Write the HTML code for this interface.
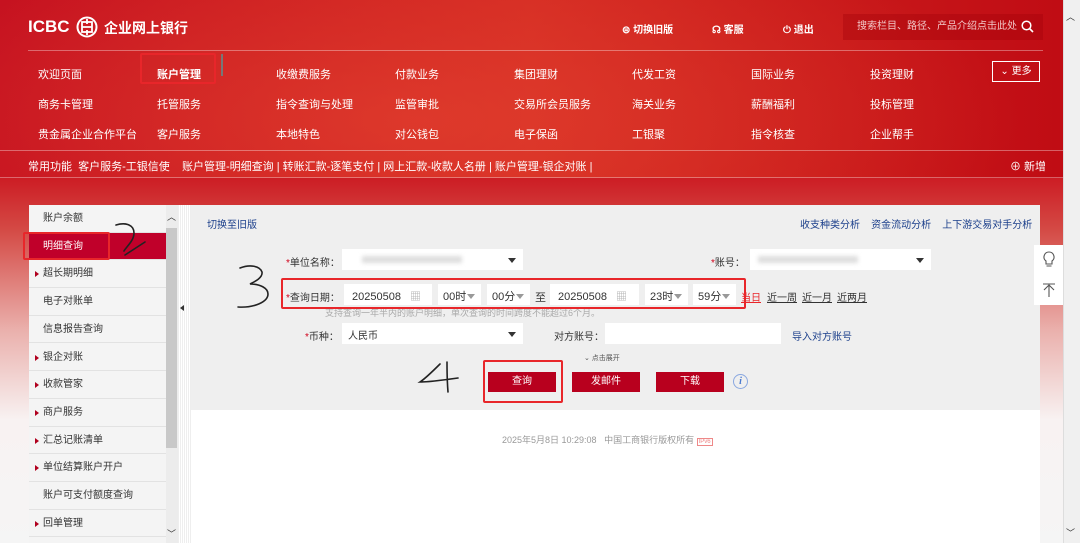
<!DOCTYPE html>
<html><head><meta charset="utf-8"><style>
*{margin:0;padding:0;box-sizing:border-box}
body{width:1080px;height:543px;overflow:hidden;position:relative;font-family:"Liberation Sans","Noto Sans CJK SC",sans-serif;font-size:11px;color:#333;background:#f3f3f3}
.abs{position:absolute;white-space:nowrap}
#bg{position:absolute;left:0;top:0;width:1063px;height:543px;background:linear-gradient(180deg,#c8141e 0px,#cc1a22 175px,#d44a45 230px,#eab0ac 330px,#f8f2f2 420px,#f5f5f5 543px)}
#hdr{position:absolute;left:0;top:0;width:1063px;height:178px;background:radial-gradient(ellipse 600px 200px at 420px 120px,rgba(230,70,50,.6),rgba(0,0,0,0)),linear-gradient(90deg,#c40f1f,#d42a22 50%,#c00c14)}
.w{color:#fff}
.menu{font-size:11px;color:#fff}
.line{position:absolute;height:1px;background:rgba(255,255,255,.35)}
.side{position:absolute;left:29px;top:205px;width:137px;height:338px;background:#f4f4f4}
.si{position:absolute;left:0;width:137px;height:27.7px;border-bottom:1px solid #e2e2e2;font-size:10px;color:#333;padding-left:14px;line-height:27px;white-space:nowrap}
.si.ar:before{content:"";position:absolute;left:6px;top:11px;border-left:4px solid #b0001e;border-top:3px solid transparent;border-bottom:3px solid transparent}
.panel{position:absolute;left:191px;top:205px;width:849px;height:205px;background:#efefef}
.box{position:absolute;background:#fff;height:21px;white-space:nowrap;overflow:hidden}
.lbl{position:absolute;font-size:10px;color:#333;white-space:nowrap}
.lbl i{color:#d0021b;font-style:normal}
.tri{position:absolute;border-top:5px solid #333;border-left:4px solid transparent;border-right:4px solid transparent}
.gtri{display:inline-block;border-top:5px solid #999;border-left:4px solid transparent;border-right:4px solid transparent;margin-left:1px;vertical-align:1px}
.btn{position:absolute;top:372px;width:68px;height:20px;background:#b8001e;color:#fff;font-size:10px;text-align:center;line-height:20px}
.rb{position:absolute;border:2px solid #e8262a;border-radius:2px}
.link{color:#1b3f8b;font-size:10px}
.u{text-decoration:underline;color:#333;font-size:10px}
</style></head><body>
<div id="bg"></div>
<div id="hdr"></div>
<div class="abs w" style="left:28px;top:17px;font-size:17px;font-weight:bold">ICBC</div>
<svg class="abs" style="left:76px;top:16px" width="22" height="22" viewBox="0 0 22 22"><circle cx="11" cy="11" r="9.5" fill="none" stroke="#fff" stroke-width="2"/><rect x="6" y="6" width="10" height="10" fill="none" stroke="#fff" stroke-width="1.8"/><path d="M11 3v5M11 14v5M6 11h10" stroke="#fff" stroke-width="1.8"/></svg>
<div class="abs w" style="left:104px;top:18px;font-size:14px;font-weight:bold">企业网上银行</div>
<div class="abs w" style="left:622px;top:21px;font-size:10px;font-weight:bold">⊜ 切换旧版</div>
<div class="abs w" style="left:712px;top:21px;font-size:10px;font-weight:bold">☊ 客服</div>
<div class="abs w" style="left:783px;top:21px;font-size:10px;font-weight:bold">⏻ 退出</div>
<div class="abs" style="left:843px;top:14px;width:200px;height:26px;background:rgba(160,0,10,.35);color:#f2c8c8;font-size:10px;line-height:26px;padding-left:14px">搜索栏目、路径、产品介绍点击此处</div>
<svg class="abs" style="left:1021px;top:20px" width="13" height="13"><circle cx="5.5" cy="5.5" r="4.3" fill="none" stroke="#fff" stroke-width="1.5"/><path d="M8.5 8.5l3.5 3.5" stroke="#fff" stroke-width="1.6"/></svg>
<div class="line" style="left:28px;top:50px;width:1015px"></div>
<div class="menu">
<div class="abs" style="left:38px;top:66px">欢迎页面</div><div class="abs" style="left:157px;top:66px;font-weight:bold">账户管理</div><div class="abs" style="left:276px;top:66px">收缴费服务</div><div class="abs" style="left:395px;top:66px">付款业务</div><div class="abs" style="left:514px;top:66px">集团理财</div><div class="abs" style="left:632px;top:66px">代发工资</div><div class="abs" style="left:751px;top:66px">国际业务</div><div class="abs" style="left:870px;top:66px">投资理财</div>
<div class="abs" style="left:38px;top:96px">商务卡管理</div><div class="abs" style="left:157px;top:96px">托管服务</div><div class="abs" style="left:276px;top:96px">指令查询与处理</div><div class="abs" style="left:395px;top:96px">监管审批</div><div class="abs" style="left:514px;top:96px">交易所会员服务</div><div class="abs" style="left:632px;top:96px">海关业务</div><div class="abs" style="left:751px;top:96px">薪酬福利</div><div class="abs" style="left:870px;top:96px">投标管理</div>
<div class="abs" style="left:38px;top:126px">贵金属企业合作平台</div><div class="abs" style="left:157px;top:126px">客户服务</div><div class="abs" style="left:276px;top:126px">本地特色</div><div class="abs" style="left:395px;top:126px">对公钱包</div><div class="abs" style="left:514px;top:126px">电子保函</div><div class="abs" style="left:632px;top:126px">工银聚</div><div class="abs" style="left:751px;top:126px">指令核查</div><div class="abs" style="left:870px;top:126px">企业帮手</div>
</div>
<div class="abs w" style="left:992px;top:61px;width:48px;height:21px;border:1px solid #fff;font-size:10px;line-height:19px;text-align:center">⌄ 更多</div>
<div class="abs" style="left:221px;top:54px;width:2px;height:22px;background:#777"></div>
<div class="line" style="left:0;top:150px;width:1063px"></div>
<div class="abs w" style="left:28px;top:158px;font-size:11px">常用功能&nbsp; 客户服务-工银信使&nbsp;&nbsp;&nbsp; 账户管理-明细查询 | 转账汇款-逐笔支付 | 网上汇款-收款人名册 | 账户管理-银企对账 |</div>
<div class="abs w" style="left:1010px;top:158px;font-size:11px">⊕ 新增</div>
<div class="line" style="left:0;top:177px;width:1063px"></div>

<div class="side">
<div class="si" style="top:0">账户余额</div>
<div class="si" style="top:27.7px;background:#c0002a;color:#fff">明细查询</div>
<div class="si ar" style="top:55.4px">超长期明细</div>
<div class="si" style="top:83.1px">电子对账单</div>
<div class="si" style="top:110.8px">信息报告查询</div>
<div class="si ar" style="top:138.5px">银企对账</div>
<div class="si ar" style="top:166.2px">收款管家</div>
<div class="si ar" style="top:193.9px">商户服务</div>
<div class="si ar" style="top:221.6px">汇总记账清单</div>
<div class="si ar" style="top:249.3px">单位结算账户开户</div>
<div class="si" style="top:277px">账户可支付额度查询</div>
<div class="si ar" style="top:304.7px">回单管理</div>
</div>
<div class="abs" style="left:166px;top:205px;width:12px;height:338px;background:#ececec"></div>
<div class="abs" style="left:166px;top:228px;width:11px;height:220px;background:#c8c8c8"></div>
<div class="abs" style="left:167px;top:210px;font-size:9px;color:#333">︿</div>
<div class="abs" style="left:167px;top:527px;font-size:9px;color:#333">﹀</div>
<div class="abs" style="left:178px;top:205px;width:13px;height:338px;background:repeating-linear-gradient(90deg,#eee 0 1px,#fff 1px 2px)"></div>
<div class="abs" style="left:180px;top:305px;border-right:4px solid #333;border-top:3px solid transparent;border-bottom:3px solid transparent"></div>

<div class="abs" style="left:191px;top:410px;width:849px;height:133px;background:#fff"></div>
<div class="panel"></div>
<div class="abs link" style="left:207px;top:216px">切换至旧版</div>
<div class="abs link" style="left:800px;top:216px">收支种类分析&nbsp;&nbsp;&nbsp; 资金流动分析&nbsp;&nbsp;&nbsp; 上下游交易对手分析</div>

<div class="lbl" style="left:286px;top:254px"><i>*</i>单位名称：</div>
<div class="box" style="left:342px;top:249px;width:181px"><div class="abs" style="left:20px;top:7px;width:100px;height:7px;background:#ddd;filter:blur(2px)"></div></div>
<div class="tri" style="left:508px;top:258px"></div>
<div class="lbl" style="left:711px;top:254px"><i>*</i>账号：</div>
<div class="box" style="left:750px;top:249px;width:181px"><div class="abs" style="left:8px;top:7px;width:100px;height:7px;background:#ddd;filter:blur(2px)"></div></div>
<div class="tri" style="left:916px;top:258px"></div>

<div class="lbl" style="left:286px;top:289px"><i>*</i>查询日期：</div>
<div class="box" style="left:344px;top:284px;width:88px;padding:4px 8px;font-size:11px">20250508 <span style="color:#aaa;margin-left:6px">▦</span></div>
<div class="box" style="left:438px;top:284px;width:43px;padding:4px 5px;font-size:11px">00时<span class="gtri"></span></div>
<div class="box" style="left:487px;top:284px;width:43px;padding:4px 5px;font-size:11px">00分<span class="gtri"></span></div>
<div class="lbl" style="left:535px;top:289px;font-size:11px">至</div>
<div class="box" style="left:550px;top:284px;width:89px;padding:4px 8px;font-size:11px">20250508 <span style="color:#aaa;margin-left:6px">▦</span></div>
<div class="box" style="left:645px;top:284px;width:43px;padding:4px 5px;font-size:11px">23时<span class="gtri"></span></div>
<div class="box" style="left:693px;top:284px;width:43px;padding:4px 5px;font-size:11px">59分<span class="gtri"></span></div>
<div class="abs" style="left:741px;top:289px;font-size:10px;color:#e8262a;text-decoration:underline">当日</div>
<div class="abs u" style="left:767px;top:289px">近一周</div>
<div class="abs u" style="left:802px;top:289px">近一月</div>
<div class="abs u" style="left:837px;top:289px">近两月</div>
<div class="abs" style="left:325px;top:306px;font-size:9px;color:#aaa">支持查询一年半内的账户明细，单次查询的时间跨度不能超过6个月。</div>

<div class="lbl" style="left:305px;top:328px"><i>*</i>币种：</div>
<div class="box" style="left:342px;top:323px;width:181px;padding:4px 6px;font-size:10px">人民币</div>
<div class="tri" style="left:508px;top:332px"></div>
<div class="lbl" style="left:554px;top:328px">对方账号：</div>
<div class="box" style="left:605px;top:323px;width:176px"></div>
<div class="abs link" style="left:792px;top:328px">导入对方账号</div>
<div class="abs" style="left:584px;top:353px;font-size:7px;color:#555">⌄ 点击展开</div>
<div class="btn" style="left:488px">查询</div>
<div class="btn" style="left:572px">发邮件</div>
<div class="btn" style="left:656px">下载</div>
<div class="abs" style="left:733px;top:374px;width:15px;height:15px;border:1px solid #8aa8e0;border-radius:50%;color:#4a7ad0;font-size:10px;font-weight:bold;text-align:center;line-height:13px;font-style:italic;font-family:'Liberation Serif',serif">i</div>

<div class="abs" style="left:502px;top:433px;font-size:9px;color:#999">2025年5月8日 10:29:08&nbsp;&nbsp; 中国工商银行版权所有 <span style="color:#e88;border:1px solid #e88;font-size:6px;padding:0 1px">IPv6</span></div>

<div class="abs" style="left:1034px;top:245px;width:29px;height:60px;background:#fff"></div>
<svg class="abs" style="left:1040px;top:250px" width="18" height="50"><path d="M9 2a5 5 0 0 0-3 9v3h6v-3a5 5 0 0 0-3-9zM6.5 16h5" fill="none" stroke="#555" stroke-width="1.1"/><path d="M3 34h12M9 34v13M9 35l-5 5M9 35l5 5" fill="none" stroke="#555" stroke-width="1.1"/></svg>
<div class="abs" style="left:1063px;top:0;width:17px;height:543px;background:#f0f0f0;border-left:1px solid #ddd"></div>
<div class="abs" style="left:1066px;top:10px;font-size:9px;color:#333">︿</div>
<div class="abs" style="left:1066px;top:526px;font-size:9px;color:#333">﹀</div>

<div class="rb" style="left:140px;top:53px;width:76px;height:31px"></div>
<div class="rb" style="left:23px;top:232px;width:87px;height:28px"></div>
<div class="rb" style="left:281px;top:278px;width:465px;height:31px"></div>
<div class="rb" style="left:483px;top:360px;width:80px;height:43px"></div>
<svg class="abs" style="left:0;top:0" width="1080" height="543"><g fill="none" stroke="#222" stroke-width="1.6" stroke-linecap="round">
<path d="M116 225c10-3 18 0 18 8 0 8-8 14-10 18M125 255l20-13"/>
<path d="M240 268c10-4 20-2 22 4 1 6-8 10-12 12 10 0 18 4 18 10 0 8-14 14-30 13"/>
<path d="M440 364c-6 6-14 14-20 18 10 0 24-2 38-4M447 362c0 8 0 18 1 30"/>
</g></svg>
</body></html>
